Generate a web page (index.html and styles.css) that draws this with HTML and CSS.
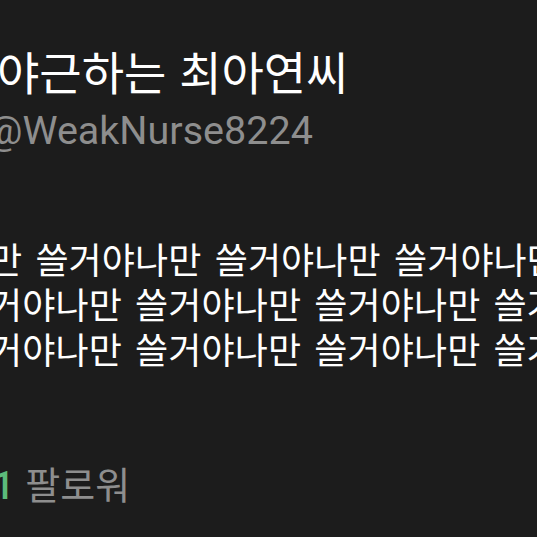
FILE: index.html
```html
<!DOCTYPE html>
<html lang="ko">
<head>
<meta charset="utf-8">
<link rel="stylesheet" href="styles.css">
</head>
<body>
<div class="profile">
  <div class="name">야근하는 최아연씨</div>
  <div class="handle">@WeakNurse8224</div>
  <div class="bio">
    <div class="bio-line first">만 쓸거야나만 쓸거야나만 쓸거야나만 쓸거야</div>
    <div class="bio-line">거야나만 쓸거야나만 쓸거야나만 쓸거야나만</div>
    <div class="bio-line">거야나만 쓸거야나만 쓸거야나만 쓸거야나만</div>
  </div>
  <div class="stats"><span class="count">1</span> <span class="label">팔로워</span></div>
</div>
</body>
</html>
```

FILE: styles.css
```css
html, body {
  margin: 0;
  padding: 0;
}
body {
  width: 537px;
  height: 537px;
  overflow: hidden;
  background: #1c1c1c;
}
.profile {
  padding-top: 44px;
  white-space: nowrap;
}
.name {
  font-family: "Noto Sans CJK KR", sans-serif;
  font-weight: 400;
  font-size: 46px;
  line-height: 52px;
  color: #ffffff;
  text-indent: -3px;
}
.handle {
  margin-top: 12px;
  font-family: Roboto, "Noto Sans CJK KR", sans-serif;
  font-size: 39.5px;
  line-height: 46px;
  color: #8e8e8e;
  text-indent: -13px;
}
.bio {
  margin-top: 82px;
  font-family: "Noto Sans CJK KR", sans-serif;
  font-size: 36px;
  line-height: 45px;
  letter-spacing: 0.1px;
  word-spacing: 3px;
  color: #ffffff;
}
.bio-line {
  text-indent: -11px;
}
.bio-line.first {
  text-indent: -11px;
}
.stats {
  margin-top: 90px;
  font-family: "Noto Sans CJK KR", sans-serif;
  font-size: 38px;
  line-height: 44px;
  color: #8e8e8e;
  text-indent: -7px;
}
.count {
  font-family: Roboto, sans-serif;
  font-weight: 500;
  color: #5cbb7a;
}
```
